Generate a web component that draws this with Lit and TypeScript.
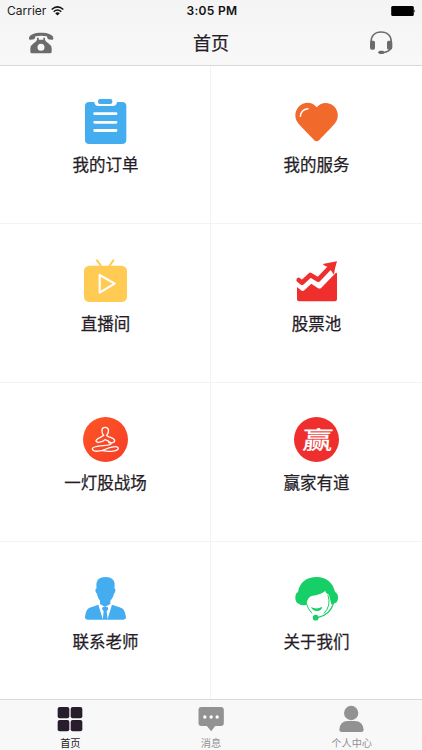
import { LitElement, html, css, svg } from "lit";
import { customElement } from "lit/decorators.js";

const tiles = [
  {
    label: "我的订单",
    box: "63 21 150 150",
    art: svg`
      <path fill="#44adf0" d="M88 36H103Q104 48 115 48H158Q170 48 171 36H186Q199 36 199 48V149Q199 162 186 162H88Q75 162 75 149V48Q75 36 88 36Z"/>
      <rect fill="#44adf0" x="114" y="27" width="43" height="15" rx="6"/>
      <path stroke="#fff" stroke-width="8.500" stroke-linecap="round" d="M104 71H168M104 97H168M104 121.500H168"/>`,
  },
  {
    label: "我的服务",
    box: "66 21 150 150",
    art: svg`
      <path fill="#f26a2b" d="M140 52C127 35 104 35 91 46C74 60 71 82 84 99C96 114 119 135 132 150Q140 158 148 150C163 134 184 114 195 100C208 83 206 61 190 47C175 35 153 36 140 52Z"/>
      <path fill="none" stroke="#fff" stroke-width="4.500" stroke-linecap="round" d="M91 79Q93 58 114 56"/>`,
  },
  {
    label: "直播间",
    box: "63 15 150 150",
    art: svg`
      <path stroke="#ffcb52" stroke-width="6" stroke-linecap="round" d="M111 31L123 48M160 31L148 48"/>
      <rect fill="#ffcb52" x="72" y="47" width="129" height="109" rx="16"/>
      <path fill="none" stroke="#fff" stroke-width="6.500" stroke-linejoin="round" d="M119 75V128L164 101Z"/>`,
  },
  {
    label: "股票池",
    box: "66 15 150 150",
    art: svg`
      <path fill="none" stroke="#ef2f2d" stroke-width="14" stroke-linejoin="round" stroke-linecap="round" d="M86 90L96 98L121 75L145 89L179 53"/>
      <path fill="#ef2f2d" d="M201 34L158 42Q164 48 172 50L186 65Q188 72 192 73Q195 52 201 34Z"/>
      <path fill="#ef2f2d" d="M81 111L93 121Q98 125 103 121L124 101L143 114Q149 118 154 113L197 69Q201 66 201 72V148Q201 154 195 154H87Q81 154 81 148Z"/>`,
  },
  {
    label: "一灯股战场",
    box: "63 27 150 150",
    art: svg`
      <defs><linearGradient id="flame" x1="0" y1="0" x2="1" y2="1"><stop offset="0" stop-color="#ff5626"/><stop offset="1" stop-color="#f53d27"/></linearGradient></defs>
      <circle cx="136.500" cy="103.500" r="67.500" fill="url(#flame)"/>
      <g fill="none" stroke="#fff" stroke-width="4" stroke-linecap="round" stroke-linejoin="round">
        <path d="M131 91C123 81 124 67 135 67C147 67 149 80 140 91C145 98 163 98 164 107C164 113 154 115 146 113"/>
        <path d="M131 91C124 98 108 100 108 108C109 115 128 112 135 104C142 107 155 112 153 117C149 124 97 119 97 131C97 142 123 140 138 132C150 126 174 121 175 130C175 139 149 141 128 137"/>
      </g>`,
  },
  {
    label: "赢家有道",
    box: "66 27 150 150",
    art: svg`
      <circle cx="139.500" cy="103.500" r="67.500" fill="#ef2f2d"/>
      <text class="seal" transform="translate(141 131) skewX(-5) scale(1.060 .86)" text-anchor="middle">赢</text>`,
  },
  {
    label: "联系老师",
    box: "63 24 150 150",
    art: svg`
      <path fill="#44adf0" d="M110 70C106 47 115 36 137 36C158 36 168 48 163 70C168 70 167 82 162 86C160 95 155 103 151 107V117L135 126L120 117V107C116 102 112 94 111 86C105 82 105 71 110 70Z"/>
      <path fill="#44adf0" d="M115 119L129 164H84Q75 164 75 157Q77 139 83 132Q87 128 115 119ZM156 119L142 164H189Q198 164 198 157Q195 138 189 132Q185 128 156 119Z"/>
      <path fill="#44adf0" d="M128 126H143L145 132L140 139L143 164H128L131 139L126 132Z"/>`,
  },
  {
    label: "关于我们",
    box: "66 24 150 150",
    art: svg`
      <path fill="#16d067" d="M84 81C89 51 111 36 140 36C168 36 190 53 195 81Q204 84 204 98Q204 112 194 115Q190 119 184 118L177 90C173 86 169 87 166 78Q148 91 128 92Q113 93 109 119Q97 124 86 116Q76 112 76 98Q76 84 84 81Z"/>
      <path fill="none" stroke="#16d067" stroke-width="4" stroke-linecap="round" d="M190 116C184 137 170 152 143 158"/>
      <path fill="none" stroke="#16d067" stroke-width="3" stroke-linecap="round" d="M174 91Q185 122 162 145M109 115Q114 133 125 144"/>
      <path fill="#16d067" d="M123 126Q140 135 157 125Q154 138 141 138Q128 138 123 126Z"/>
      <circle cx="137" cy="158" r="8.500" fill="#16d067"/>`,
  },
];

@customElement("app-root")
export class AppRoot extends LitElement {
  static styles = css`
    :host {
      display: flex;
      flex-direction: column;
      width: 422px;
      height: 750px;
      overflow: hidden;
      background: #fff;
      color: #241c26;
      font-family: "Noto Sans CJK SC", sans-serif;
    }
    svg { display: block; flex: none; }
    .top {
      flex: none;
      height: 66px;
      box-sizing: border-box;
      background: linear-gradient(#f4f4f4, #f8f8f8);
      border-bottom: 1px solid #d9d9da;
    }
    .status, .nav {
      display: grid;
      grid-template-columns: 1fr auto 1fr;
      align-items: center;
    }
    .status {
      height: 22px;
      padding: 0 6px 0 7px;
      font: 12px/22px Inter, sans-serif;
      color: #222;
    }
    .carrier { display: flex; align-items: center; gap: 5px; }
    .time { font-weight: 600; letter-spacing: 0.3px; color: #111; padding-left: 1px; }
    .end { justify-self: end; }
    .nav { height: 41px; padding: 0 28px; }
    .title {
      font-size: 18px;
      line-height: 40px;
      padding-bottom: 1px;
      -webkit-text-stroke: 0.25px currentColor;
    }
    .grid {
      flex: none;
      display: grid;
      grid-template-columns: 211px 211px;
      grid-template-rows: 158px 159px 159px 157px;
    }
    .tile {
      box-sizing: border-box;
      display: flex;
      flex-direction: column;
      align-items: center;
      padding-top: 31px;
      border-bottom: 1px solid #f3f3f3;
    }
    .tile:nth-child(odd) { box-shadow: inset -1px 0 #f3f3f3; }
    .tile:nth-child(-n + 2) .label { margin-top: 5px; }
    .tile:nth-last-child(-n + 2) { border-bottom: 0; }
    .label {
      margin-top: 6px;
      font-size: 16.5px;
      line-height: 24px;
      -webkit-text-stroke: 0.25px currentColor;
    }
    .seal { font-size: 86px; font-weight: 500; fill: #fff; }
    .tabs {
      flex: none;
      height: 51px;
      box-sizing: border-box;
      display: grid;
      grid-template-columns: repeat(3, 1fr);
      background: #f8f8f8;
      border-top: 1px solid #d9d9da;
    }
    .tab {
      display: flex;
      flex-direction: column;
      align-items: center;
      padding-top: 4px;
      color: #929292;
      font-size: 10.2px;
      line-height: 16px;
    }
    .tab svg { margin-bottom: 1px; }
    .tab.on { color: #241c26; }
  `;

  render() {
    return html`
      <header class="top">
        <div class="status">
          <div class="carrier">Carrier
            <svg width="13" height="10" viewBox="0 0 13 10" fill="none" stroke="#111" stroke-width="1.500">
              <path d="M.7 3.500Q6.500-1.700 12.300 3.500M2.700 5.700Q6.500 2.300 10.300 5.700"/>
              <path fill="#111" stroke="none" d="M4.200 7.200Q6.500 5.400 8.800 7.200L6.500 9.500Z"/>
            </svg>
          </div>
          <div class="time">3:05 PM</div>
          <svg class="end" width="25" height="11" viewBox="0 0.500 25 11">
            <rect x=".2" y=".5" width="22.600" height="10" rx="1.500"/>
            <path d="M23.400 4Q25 5.500 23.400 7Z"/>
          </svg>
        </div>
        <div class="nav">
          <svg width="26" height="24" viewBox="84 93 78 72" fill="#6b6b6b">
            <path d="M87 116C86 103 105 98 123 98C142 98 161 103 160 116Q160 120 154 119L145 118Q141 117 141 109Q123 105 106 109Q106 117 102 118L92 119Q87 120 87 116Z"/>
            <path fill-rule="evenodd" d="M111 113H116V119H130V113H135V119Q136 124 145 130Q155 137 155 145V155Q155 160 150 160H96Q91 160 91 155V145Q91 137 101 130Q110 124 111 119ZM123 131A10.500 10.500 0 1 0 123 152A10.500 10.500 0 1 0 123 131Z"/>
          </svg>
          <div class="title">首页</div>
          <svg class="end" width="26" height="26" viewBox="471 90 78 78">
            <path fill="none" stroke="#6b6b6b" stroke-width="4.500" d="M480 127C480 108 491 96 510 96C530 96 541 108 541 127M538 146Q535 154 516 158"/>
            <path fill="#6b6b6b" d="M482 122H487Q492 122 492 127V144Q492 149 487 149H483Q477 149 477 143V128Q477 122 482 122ZM533 122H538Q544 122 544 128V143Q544 149 538 149H533Q528 149 528 144V127Q528 122 533 122Z"/>
            <rect x="502" y="152" width="18" height="10" rx="5" fill="#6b6b6b"/>
          </svg>
        </div>
      </header>
      <main class="grid">
        ${tiles.map((t) => html`
          <div class="tile">
            <svg width="50" height="50" viewBox=${t.box} fill="none">${t.art}</svg>
            <div class="label">${t.label}</div>
          </div>`)}
      </main>
      <nav class="tabs">
        <div class="tab on">
          <svg width="28" height="30" viewBox="170 42 84 90" fill="#281d2b">
            <rect x="175" y="51" width="35" height="34" rx="6"/><rect x="214" y="51" width="35" height="34" rx="6"/>
            <rect x="175" y="90" width="35" height="34" rx="6"/><rect x="214" y="90" width="35" height="34" rx="6"/>
          </svg>
          首页
        </div>
        <div class="tab">
          <svg width="28" height="30" viewBox="592.500 42 84 90" fill="#929292">
            <path d="M605 51H664Q673 51 673 60V99Q673 108 664 108H647L635 124L622 108H605Q597 108 597 99V60Q597 51 605 51Z"/>
            <g fill="#fff"><circle cx="616" cy="81" r="5"/><circle cx="635" cy="81" r="5"/><circle cx="653" cy="81" r="5"/></g>
          </svg>
          消息
        </div>
        <div class="tab">
          <svg width="28" height="30" viewBox="467 42 84 90" fill="#929292">
            <circle cx="506.500" cy="69" r="21.500"/>
            <path d="M471 119Q473 93 496 93H518Q541 93 544 119Q544 126 537 126H478Q471 126 471 119Z"/>
          </svg>
          个人中心
        </div>
      </nav>`;
  }
}
